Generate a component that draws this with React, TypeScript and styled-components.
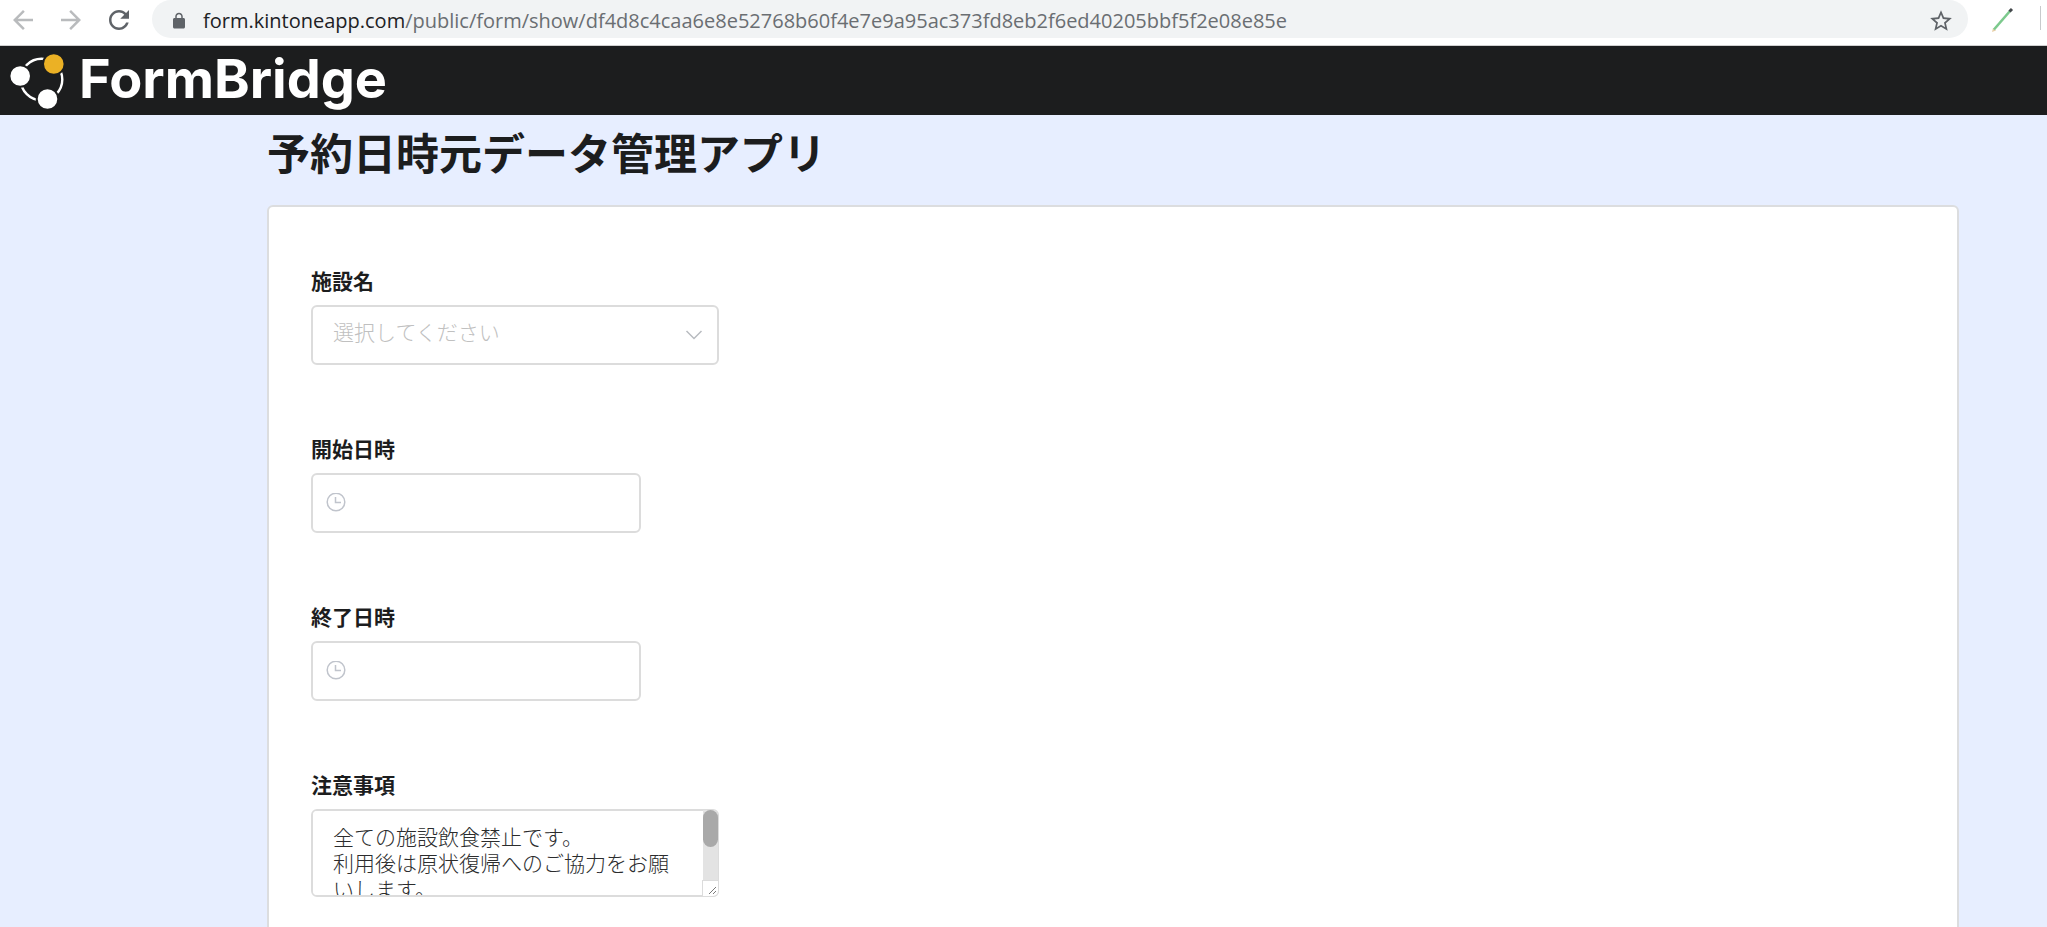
import React from "react";
import styled, { createGlobalStyle } from "styled-components";

const GlobalStyle = createGlobalStyle`
  *, *::before, *::after { box-sizing: border-box; }
  body {
    margin: 0;
    background: #e7eeff;
    color: #1c1d1e;
    font-family: "Noto Sans CJK JP", sans-serif;
  }
`;

const Window = styled.div`
  display: flex;
  flex-direction: column;
  height: 100vh;
  overflow: hidden;
`;

const Toolbar = styled.nav`
  display: flex;
  flex: none;
  align-items: flex-start;
  gap: 18px;
  height: 46px;
  padding: 0 6px 0 8px;
  background: #fff;
  border-bottom: 1px solid #d0d0d0;
`;

const ToolButton = styled.button<{ $muted?: boolean; $wide?: boolean }>`
  display: flex;
  align-items: center;
  justify-content: center;
  flex: none;
  width: ${(p) => (p.$wide ? 36 : 30)}px;
  height: 40px;
  padding: 0;
  border: 0;
  background: none;
  color: ${(p) => (p.$muted ? "#b9bbbd" : "#5f6368")};
`;

const AddressBar = styled.div`
  display: flex;
  align-items: center;
  flex: 1;
  min-width: 0;
  height: 38px;
  padding: 4px 12px 0 18px;
  border-radius: 19px;
  background: #f1f3f4;
  color: #5f6368;
`;

const Url = styled.span`
  flex: 1;
  min-width: 0;
  margin-left: 15px;
  overflow: hidden;
  white-space: nowrap;
  font: 20px/30px "Open Sans", sans-serif;
  color: #6a6e72;
`;

const Host = styled.span`
  color: #202124;
`;

const Divider = styled.span`
  flex: none;
  width: 1px;
  height: 24px;
  margin-top: 6px;
  background: #c8cacc;
`;

const Page = styled.div`
  flex: 1;
  min-height: 0;
  overflow: hidden;
`;

const Brand = styled.header`
  display: flex;
  align-items: center;
  gap: 13px;
  height: 69px;
  padding-left: 8px;
  background: #1c1d1e;
`;

const BrandName = styled.span`
  padding-bottom: 4px;
  font: 700 54px/60px Inter, sans-serif;
  color: #fff;
`;

const Main = styled.main`
  margin: 0 88px 0 calc(13% + 1px);
`;

const Title = styled.h1`
  margin: 0;
  padding: 4px 0 22px;
  font-size: 43px;
  line-height: 64px;
  font-weight: 700;
`;

const Card = styled.form`
  display: flex;
  flex-direction: column;
  gap: 68px;
  padding: 58px 42px 70px;
  background: #fff;
  border: 2px solid #dcdddf;
  border-radius: 6px;
`;

const Field = styled.div`
  display: flex;
  flex-direction: column;
  align-items: flex-start;
  gap: 10px;
`;

const Label = styled.label`
  font-size: 21px;
  line-height: 30px;
  font-weight: 700;
`;

const Control = styled.div<{ $wide?: boolean }>`
  display: flex;
  position: relative;
  width: ${(p) => (p.$wide ? 408 : 330)}px;
  max-width: 100%;
`;

const Select = styled.select`
  appearance: none;
  width: 100%;
  height: 60px;
  padding: 0 50px 8px 20px;
  border: 2px solid #dcdcdc;
  border-radius: 6px;
  background: #fff;
  color: #c0c0c0;
  font: 300 21px/30px "Noto Sans CJK JP", sans-serif;
`;

const DateInput = styled.input`
  width: 100%;
  height: 60px;
  padding: 0 20px 0 42px;
  border: 2px solid #dcdcdc;
  border-radius: 6px;
  background: #fff;
  font: 300 21px/30px "Noto Sans CJK JP", sans-serif;
`;

const FieldIcon = styled.span<{ $side: "left" | "right" }>`
  display: flex;
  align-items: center;
  position: absolute;
  top: 0;
  bottom: 0;
  ${(p) => p.$side}: ${(p) => (p.$side === "left" ? 15 : 16)}px;
  pointer-events: none;
`;

const TextArea = styled.textarea`
  width: 100%;
  height: 88px;
  padding: 12px 36px 12px 20px;
  border: 2px solid #dcdcdc;
  border-radius: 6px;
  background: #fff;
  color: #2b2c2d;
  font: 300 21px/26px "Noto Sans CJK JP", sans-serif;
  resize: none;
  scrollbar-width: none;
`;

const ScrollTrack = styled.div`
  position: absolute;
  top: 1px;
  right: 1px;
  bottom: 1px;
  display: flex;
  flex-direction: column;
  justify-content: space-between;
  width: 15px;
  border-radius: 0 5px 5px 0;
  background: #e3e3e3;
  pointer-events: none;
`;

const ScrollThumb = styled.div`
  height: 37px;
  border-radius: 8px;
  background: #a9a9a9;
`;

const ResizeCorner = styled.div`
  display: flex;
  height: 15px;
  background: #fff;
  border-radius: 0 0 5px 0;
  box-shadow: 0 0 0 1px #dcdcdc;
`;

const LogoMark = () => (
  <svg width="58" height="60" viewBox="8 51 58 60" aria-hidden="true">
    <circle cx="41.5" cy="79.5" r="20.8" fill="none" stroke="#fff" strokeWidth="2.4" />
    <g stroke="#1c1d1e" strokeWidth="2">
      <circle cx="20.2" cy="76" r="10.8" fill="#fff" />
      <circle cx="47.5" cy="99" r="10.8" fill="#fff" />
      <circle cx="53.8" cy="64" r="10.8" fill="#ebb125" />
    </g>
  </svg>
);

const Glyph = ({ d, size = 30 }: { d: string; size?: number }) => (
  <svg width={size} height={size} viewBox="0 0 24 24" fill="currentColor" aria-hidden="true">
    <path d={d} />
  </svg>
);

const Clock = () => (
  <svg width="20" height="20" viewBox="0 0 20 20" fill="none" stroke="#c0c4cc" strokeWidth="1.5" aria-hidden="true">
    <circle cx="10" cy="9" r="8.8" />
    <path d="M9.5 4V9.5H15" />
  </svg>
);

const Chevron = () => (
  <svg width="18" height="12" viewBox="0 0 18 12" fill="none" stroke="#b8bbc0" strokeWidth="1.5" aria-hidden="true">
    <path d="M1.5 2L9 9.5L16.5 2" />
  </svg>
);

const ResizeGrip = () => (
  <svg width="15" height="15" viewBox="0 0 15 15" stroke="#7a7a7a" strokeWidth="1" aria-hidden="true">
    <path d="M6 13L13 6M10 13L13 10" />
  </svg>
);

const Pencil = () => (
  <svg width="24" height="26" viewBox="0 0 24 26" aria-hidden="true">
    <path d="M0 25L1 21L4 23.5Z" fill="#e8cfa8" />
    <path d="M2 22.5L18 4" stroke="#7cc98d" strokeWidth="2.6" />
    <path d="M17.5 4.5L20 2" stroke="#44484c" strokeWidth="3" />
  </svg>
);

const DateField = ({ id, label }: { id: string; label: string }) => (
  <Field>
    <Label htmlFor={id}>{label}</Label>
    <Control>
      <DateInput id={id} type="text" />
      <FieldIcon $side="left"><Clock /></FieldIcon>
    </Control>
  </Field>
);

const NOTES = "全ての施設飲食禁止です。\n利用後は原状復帰へのご協力をお願いします。\n";

export default function App() {
  return (
    <Window>
      <GlobalStyle />
      <Toolbar>
        <ToolButton $muted aria-label="Back">
          <Glyph d="M20 11H7.83l5.59-5.59L12 4l-8 8 8 8 1.41-1.41L7.83 13H20v-2z" />
        </ToolButton>
        <ToolButton $muted aria-label="Forward">
          <Glyph d="M12 4l-1.41 1.41L16.17 11H4v2h12.17l-5.58 5.59L12 20l8-8z" />
        </ToolButton>
        <ToolButton aria-label="Reload">
          <Glyph d="M17.65 6.35C16.2 4.9 14.21 4 12 4c-4.42 0-7.99 3.58-7.99 8s3.57 8 7.99 8c3.73 0 6.84-2.55 7.73-6h-2.08c-.82 2.33-3.04 4-5.65 4-3.31 0-6-2.69-6-6s2.69-6 6-6c1.66 0 3.14.69 4.22 1.78L13 11h7V4l-2.35 2.35z" />
        </ToolButton>
        <AddressBar>
          <Glyph
            size={18}
            d="M18 8h-1V6c0-2.76-2.24-5-5-5S7 3.24 7 6v2H6c-1.1 0-2 .9-2 2v10c0 1.1.9 2 2 2h12c1.1 0 2-.9 2-2V10c0-1.1-.9-2-2-2zM9 6c0-1.66 1.34-3 3-3s3 1.34 3 3v2H9V6z"
          />
          <Url>
            <Host>form.kintoneapp.com</Host>
            /public/form/show/df4d8c4caa6e8e52768b60f4e7e9a95ac373fd8eb2f6ed40205bbf5f2e08e85e
          </Url>
          <ToolButton type="button" aria-label="Bookmark">
            <Glyph
              size={26}
              d="M22 9.24l-7.19-.62L12 2 9.19 8.63 2 9.24l5.46 4.73L5.82 21 12 17.27 18.18 21l-1.63-7.03L22 9.24zM12 15.4l-3.76 2.27 1-4.28-3.32-2.88 4.38-.38L12 6.1l1.71 4.04 4.38.38-3.32 2.88 1 4.28L12 15.4z"
            />
          </ToolButton>
        </AddressBar>
        <ToolButton $wide aria-label="Extension"><Pencil /></ToolButton>
        <Divider />
      </Toolbar>
      <Page>
        <Brand>
          <LogoMark />
          <BrandName>FormBridge</BrandName>
        </Brand>
        <Main>
          <Title>予約日時元データ管理アプリ</Title>
          <Card>
            <Field>
              <Label htmlFor="facility">施設名</Label>
              <Control $wide>
                <Select id="facility" defaultValue="">
                  <option value="">選択してください</option>
                </Select>
                <FieldIcon $side="right"><Chevron /></FieldIcon>
              </Control>
            </Field>
            <DateField id="start" label="開始日時" />
            <DateField id="end" label="終了日時" />
            <Field>
              <Label htmlFor="notes">注意事項</Label>
              <Control $wide>
                <TextArea id="notes" defaultValue={NOTES} />
                <ScrollTrack>
                  <ScrollThumb />
                  <ResizeCorner><ResizeGrip /></ResizeCorner>
                </ScrollTrack>
              </Control>
            </Field>
          </Card>
        </Main>
      </Page>
    </Window>
  );
}
